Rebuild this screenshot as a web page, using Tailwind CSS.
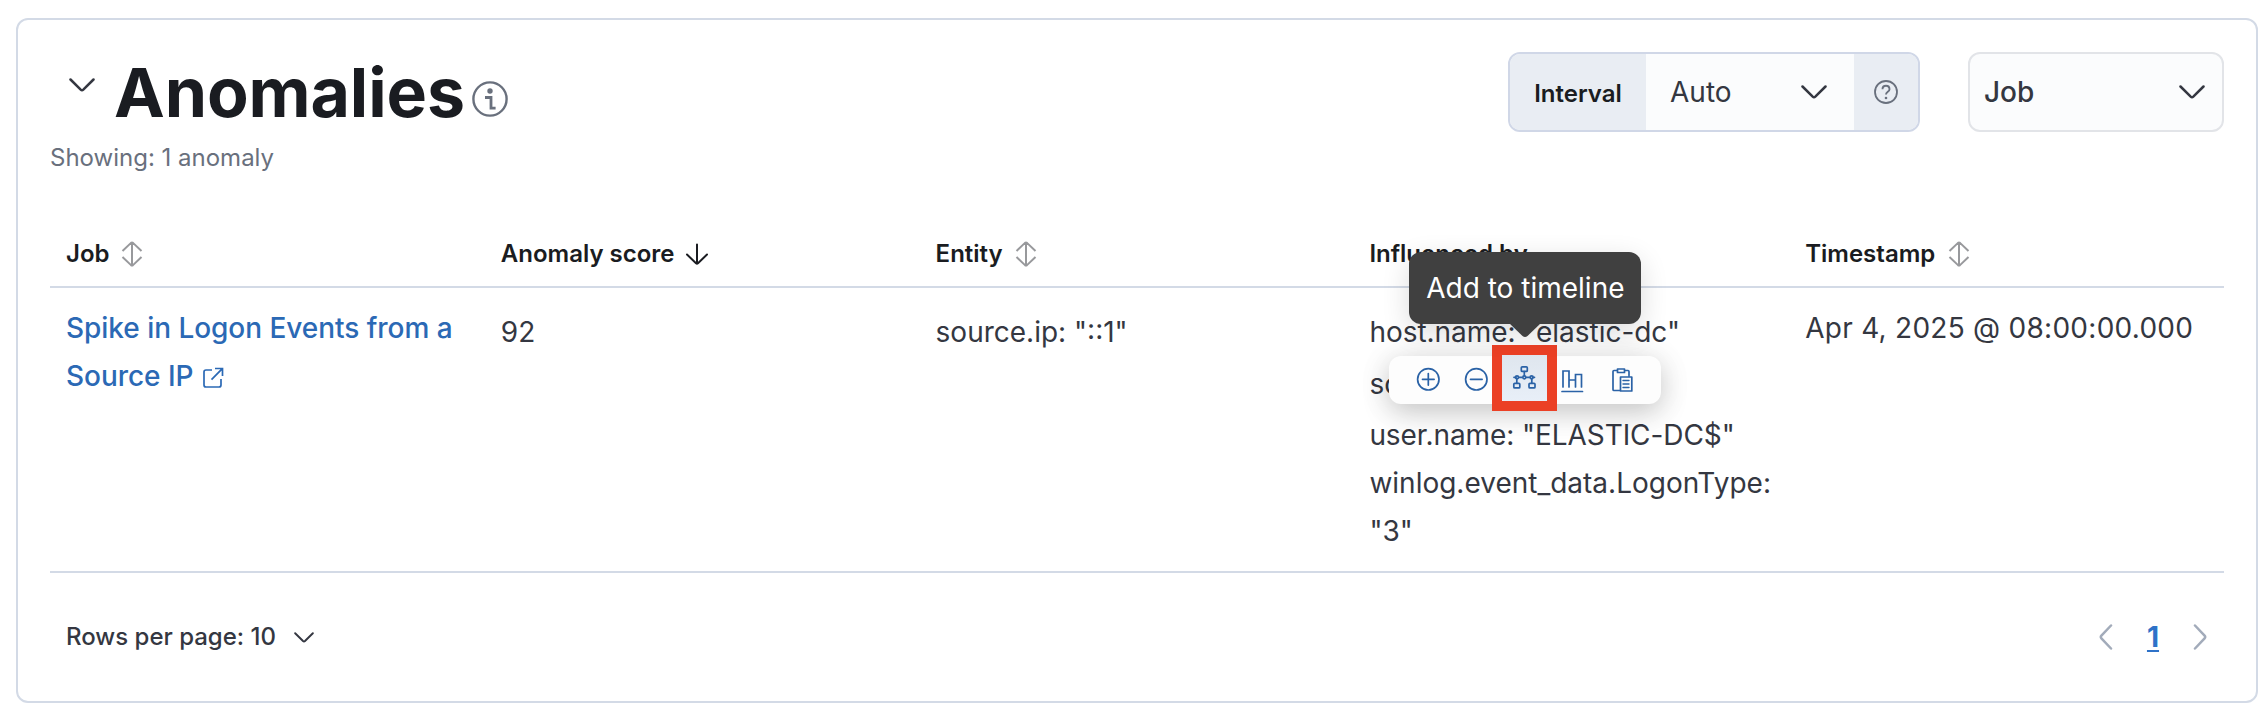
<!DOCTYPE html>
<html lang="en">
<head>
<meta charset="utf-8">
<title>Anomalies</title>
<script src="https://cdn.jsdelivr.net/npm/@tailwindcss/browser@4"></script>
</head>
<body class="bg-white font-['Inter',sans-serif] text-[28px] leading-[48px] text-[#343741]">
<svg class="hidden">
  <symbol id="sort" viewBox="0 0 32 32"><path d="M16 4.500v23M6.500 13 15 4.900q1-.8 2 0L25.500 13M6.500 19l8.500 8.100q1 .8 2 0L25.500 19" fill="none" stroke="currentColor" stroke-width="2"/></symbol>
  <symbol id="down" viewBox="0 0 26 14"><path d="M1.500 1.500 11.700 11.600q1.300 1.200 2.600 0L24.500 1.500" fill="none" stroke="currentColor" stroke-width="2.500" stroke-linecap="round"/></symbol>
</svg>
<main class="w-[2260px] h-[710px] pt-[18px] pl-4 overflow-hidden">
<section class="w-[2242px] h-[685px] border-2 border-[#d3dae6] rounded-xl px-8">
  <header class="flex justify-between h-[216px]">
    <div class="pt-8">
      <div class="flex">
        <svg class="w-[26px] h-[14px] mt-[26px] ml-[19px]"><use href="#down"/></svg>
        <h2 class="ml-[19px] w-[353px] text-[68px] leading-[80px] font-bold text-[#1a1c21] whitespace-nowrap tracking-[-0.1px]">Anomalies</h2>
        <svg class="w-9 h-9 mt-[29px] ml-[5px] text-[#69707d]" viewBox="0 0 36 36"><circle cx="18" cy="18" r="16.600" fill="none" stroke="currentColor" stroke-width="2.400"/><circle cx="18" cy="10" r="2.700" fill="currentColor"/><path d="M13 16.500h6v10.700M17.600 27.200h6" fill="none" stroke="currentColor" stroke-width="2.800"/></svg>
      </div>
      <p class="mt-[8px] text-2xl leading-9 text-[#69707d]">Showing: 1 anomaly</p>
    </div>
    <div class="flex gap-12 pt-8">
      <div class="flex items-center w-[412px] h-20 rounded-xl border-2 border-[#d0d7e7] bg-[#fbfcfd] overflow-hidden">
        <div class="flex h-full w-[136px] items-center justify-center bg-[#e9edf3] text-2xl font-semibold text-[#1a1c21] pt-1">Interval</div>
        <div class="flex flex-1 items-center justify-between pl-6 pr-[27px]"><span>Auto</span><svg class="w-[26px] h-[14px]"><use href="#down"/></svg></div>
        <div class="flex h-full w-16 items-center justify-center bg-[#e9edf3]">
          <svg class="w-6 h-6 text-[#69707d]" viewBox="0 0 24 24" fill="none" stroke="currentColor"><circle cx="12" cy="12" r="11" stroke-width="1.800"/><path d="M8.500 9.200c0-4.600 7-4.600 7 0 0 2.700-3.500 2.500-3.500 5.300" stroke-width="1.900"/><circle cx="12" cy="18" r="1.300" fill="currentColor" stroke="none"/></svg>
        </div>
      </div>
      <div class="flex items-center justify-between w-64 h-20 rounded-xl border-2 border-[#e2e4e8] bg-[#fbfcfd] pl-[14px] pr-[17px] font-medium"><span>Job</span><svg class="w-[26px] h-[14px]"><use href="#down"/></svg></div>
    </div>
  </header>

  <div class="grid grid-cols-5 h-[52px] border-b-2 border-[#d3dae6] text-2xl leading-9 font-semibold text-[#1a1c21]">
    <div class="flex px-4">Job<svg class="w-8 h-8 ml-[6px] mt-[2px] text-[#98999c]"><use href="#sort"/></svg></div>
    <div class="flex px-4">Anomaly score<svg class="w-6 h-6 ml-[10px] mt-[6px]" viewBox="0 0 24 24" fill="none" stroke="currentColor" stroke-width="2" stroke-linecap="round"><path d="M12 2.500V21M2 12.500 11 21.300q1 .8 2 0L22 12.500"/></svg></div>
    <div class="flex px-4">Entity<svg class="w-8 h-8 ml-[7px] mt-[2px] text-[#98999c]"><use href="#sort"/></svg></div>
    <div class="px-[15px]">Influenced by</div>
    <div class="flex px-4">Timestamp<svg class="w-8 h-8 ml-2 mt-[2px] text-[#98999c]"><use href="#sort"/></svg></div>
  </div>

  <div class="grid grid-cols-5 h-[285px] pt-4 border-b-2 border-[#d3dae6]">
    <a class="px-4 font-medium text-[#2b69b5] tracking-[-0.04px]"><span class="block whitespace-nowrap">Spike in Logon Events from a</span><span class="flex">Source IP<svg class="w-[22px] h-[22px] ml-[9px] mt-[15px]" viewBox="0 0 22 22" fill="none" stroke="currentColor" stroke-width="1.700"><path d="M10 3H4Q2 3 2 5v13q0 2 2 2h13q2 0 2-2v-6M13 1.500h7.500V9M20.300 1.700 9.500 12.700"/></svg></span></a>
    <div class="px-4 pt-1">92</div>
    <div class="px-4 pt-1">source.ip: "::1"</div>
    <div class="relative px-[15px] pt-1 whitespace-nowrap">
      <div class="tracking-[-0.03px]">host.name: "elastic-dc"</div>
      <div class="mt-1">source.ip: "::1"</div>
      <div class="mt-[3px]"><span class="tracking-[-0.08px]">user.name: "ELASTIC-DC$"</span><br>winlog.event_data.LogonType:<br>"3"</div>

      <div class="absolute left-[35px] top-[52px] w-[272px] h-12 rounded-xl bg-[#fdfdfd] shadow-[0_8px_28px_rgba(0,0,0,0.20),0_2px_40px_rgba(0,0,0,0.06)]">
        <svg class="w-[272px] h-12 text-[#2a62a6]" viewBox="0 0 272 48" fill="none" stroke="currentColor" stroke-width="1.700" stroke-linecap="round">
          <circle cx="39.300" cy="23.300" r="10.700"/><path d="M33.500 23.300h11.600M39.300 17.500v11.600"/>
          <circle cx="87.300" cy="23.300" r="10.700"/><path d="M81.500 23.300h11.600"/>
          <path d="M173 35.500h20.500M174 31V15h6v16M186.500 31V18.500h6V31M180.500 24h5.500"/>
          <g stroke-linejoin="round"><path d="M228 14.500h-3q-1 0-1 1v18q0 1 1 1h6M236 14.500h3q1 0 1 1v4M228.500 13h7v3.500h-7zM231.500 21h11.300v14h-11.300z"/><path d="M234 24.500h6M234 28h6M234 31.500h6" stroke-width="1.400"/></g>
        </svg>
      </div>
      <div class="absolute left-[138px] top-[41px] w-[65px] h-[66px] border-[10px] border-[#eb4025] bg-linear-to-b from-[#dfe6ee] to-[#e8eff8]">
        <svg class="w-[45px] h-[46px] text-[#2a62a6]" viewBox="0 0 45 46" fill="none" stroke="currentColor" stroke-width="1.700" stroke-linecap="round">
          <rect x="19.300" y="11.800" width="6" height="4.600" rx="1"/><path d="M22.300 16.500v4M12 22.300h2M17 22.300h3M24.500 22.300h3M30.500 22.300h2M14.800 24v4M29.800 24v4"/><circle cx="15" cy="22.300" r="1.500"/><circle cx="22.300" cy="22.300" r="1.500"/><circle cx="29.600" cy="22.300" r="1.500"/><rect x="11.800" y="28.300" width="6" height="4.600" rx="1"/><rect x="27" y="28.300" width="6" height="4.600" rx="1"/>
        </svg>
      </div>
      <div class="absolute left-[55px] -top-[52px] w-[232px] h-[72px] rounded-xl bg-[#404040] text-white text-center leading-[73px] shadow-[0_8px_28px_rgba(0,0,0,0.14)]">Add to timeline
        <svg class="absolute left-[100px] top-[71px] w-8 h-[15px]" viewBox="0 0 32 15"><path d="M0 0h32L18.500 13q-2.500 2-5 0Z" fill="#404040"/></svg>
      </div>
    </div>
    <div class="px-4 whitespace-nowrap tracking-[0.27px]">Apr 4, 2025 @ 08:00:00.000</div>
  </div>

  <footer class="flex h-[128px] items-center justify-between px-4">
    <div class="flex items-center text-2xl font-medium">Rows per page: 10<svg class="w-5 h-[11px] ml-[18px]"><use href="#down"/></svg></div>
    <div class="flex items-center text-[#a2abba]">
      <svg class="w-[14px] h-[26px]" viewBox="0 0 14 26" fill="none" stroke="currentColor" stroke-width="2.500" stroke-linecap="round"><path d="M12 1.500 2.400 11.700q-1.200 1.300 0 2.600L12 24.500"/></svg>
      <span class="w-[80px] text-center font-bold text-[#2e72c8] underline decoration-2 underline-offset-[3px]">1</span>
      <svg class="w-[14px] h-[26px] mr-[1px]" viewBox="0 0 14 26" fill="none" stroke="currentColor" stroke-width="2.500" stroke-linecap="round"><path d="m2 1.500 9.600 10.200q1.200 1.300 0 2.600L2 24.500"/></svg>
    </div>
  </footer>
</section>
</main>
</body>
</html>
